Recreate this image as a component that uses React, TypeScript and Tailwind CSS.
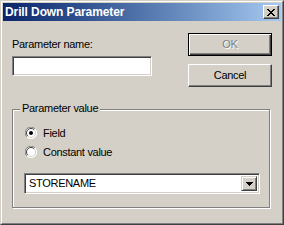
import React from 'react'

const raised =
  'border-t border-l border-t-white border-l-white border-r border-b border-r-[#404040] border-b-[#404040] shadow-[inset_-1px_-1px_0_#808080]'
const sunken =
  'border-t border-l border-t-[#808080] border-l-[#808080] border-r border-b border-r-white border-b-white shadow-[inset_1px_1px_0_#404040,inset_-1px_-1px_0_#d4d0c8]'

function CloseGlyph() {
  const rows = ['11000011', '01100110', '00111100', '00011000', '00111100', '01100110', '11000011']
  return (
    <svg width="8" height="7" viewBox="0 0 8 7" shapeRendering="crispEdges">
      {rows.map((r, y) =>
        r.split('').map((c, x) => (c === '1' ? <rect key={`${x}-${y}`} x={x} y={y} width="1" height="1" fill="#000" /> : null))
      )}
    </svg>
  )
}

function Radio({ checked }: { checked?: boolean }) {
  return (
    <svg width="12" height="12" viewBox="0 0 12 12" className="shrink-0">
      <circle cx="6" cy="6" r="5.5" fill="#fff" />
      <path d="M10 2 A5.5 5.5 0 0 0 2 10" transform="translate(-0.2,-0.2)" fill="none" stroke="#808080" strokeWidth="1" />
      <path d="M2 10 A5.5 5.5 0 0 0 10 2" fill="none" stroke="#fff" strokeWidth="1" />
      <path d="M9.2 2.8 A4.5 4.5 0 0 0 2.8 9.2" fill="none" stroke="#404040" strokeWidth="1" />
      <path d="M2.8 9.2 A4.5 4.5 0 0 0 9.2 2.8" fill="none" stroke="#d4d0c8" strokeWidth="1" />
      {checked && <circle cx="6" cy="6" r="2" fill="#000" />}
    </svg>
  )
}

export default function App() {
  return (
    <div className="w-[284px] h-[225px] bg-[#d4d0c8] border border-t-[#d4d0c8] border-l-[#d4d0c8] border-r-[#404040] border-b-[#404040] font-['Liberation_Sans',Arial,sans-serif] text-[11px] leading-[13px] tracking-[-0.3px] text-black select-none">
      <div className="h-full border border-t-white border-l-white border-r-[#808080] border-b-[#808080] p-px flex flex-col">
        <div className="h-[18px] shrink-0 flex items-center justify-between bg-gradient-to-r from-[#0a246a] to-[#a6caf0] pl-[2px] pr-[2px]">
          <span className="text-white font-bold text-[12px] tracking-[-0.1px]">Drill Down Parameter</span>
          <button className={`w-[16px] h-[14px] bg-[#d4d0c8] flex items-center justify-center ${raised}`}>
            <CloseGlyph />
          </button>
        </div>

        <div className="flex items-start">
          <div className="ml-[9px] mt-[17px] flex flex-col">
            <label className="h-[13px]">Parameter name:</label>
            <input className={`mt-[5px] w-[140px] h-[20px] bg-white outline-none px-[3px] ${sunken}`} />
          </div>
          <div className="ml-[36px] mt-[12px] flex flex-col">
            <button
              disabled
              className="w-[84px] h-[23px] border border-black bg-[#d4d0c8] shadow-[inset_1px_1px_0_#fff,inset_-1px_-1px_0_#404040,inset_-2px_-2px_0_#808080] text-[#808080] [text-shadow:1px_1px_0_#fff]"
            >
              OK
            </button>
            <button className={`mt-[8px] w-[84px] h-[23px] bg-[#d4d0c8] ${raised}`}>Cancel</button>
          </div>
        </div>

        <div className="ml-[9px] mt-[22px] w-[258px] h-[99px] border border-[#808080] shadow-[inset_1px_1px_0_#fff,1px_1px_0_#fff] flex flex-col">
          <div className="-mt-[8px] ml-[7px] px-[2px] w-fit bg-[#d4d0c8] h-[13px]">Parameter value</div>
          <div className="mt-[12px] ml-[12px] h-[12px] flex items-center gap-[6px]">
            <Radio checked />
            <span>Field</span>
          </div>
          <div className="mt-[7px] ml-[12px] h-[12px] flex items-center gap-[6px]">
            <Radio />
            <span>Constant value</span>
          </div>
          <div className={`mt-[15px] ml-[11px] w-[236px] h-[21px] bg-white flex items-stretch p-[2px] ${sunken}`}>
            <div className="flex-1 flex items-center pl-[2px]">STORENAME</div>
            <div className={`w-[16px] bg-[#d4d0c8] flex items-center justify-center border-t-[#d4d0c8] border-l-[#d4d0c8] border-r-[#404040] border-b-[#404040] border shadow-[inset_1px_1px_0_#fff,inset_-1px_-1px_0_#808080]`}>
              <svg width="7" height="4" viewBox="0 0 7 4" shapeRendering="crispEdges">
                <rect x="0" y="0" width="7" height="1" fill="#000" />
                <rect x="1" y="1" width="5" height="1" fill="#000" />
                <rect x="2" y="2" width="3" height="1" fill="#000" />
                <rect x="3" y="3" width="1" height="1" fill="#000" />
              </svg>
            </div>
          </div>
        </div>
      </div>
    </div>
  )
}
